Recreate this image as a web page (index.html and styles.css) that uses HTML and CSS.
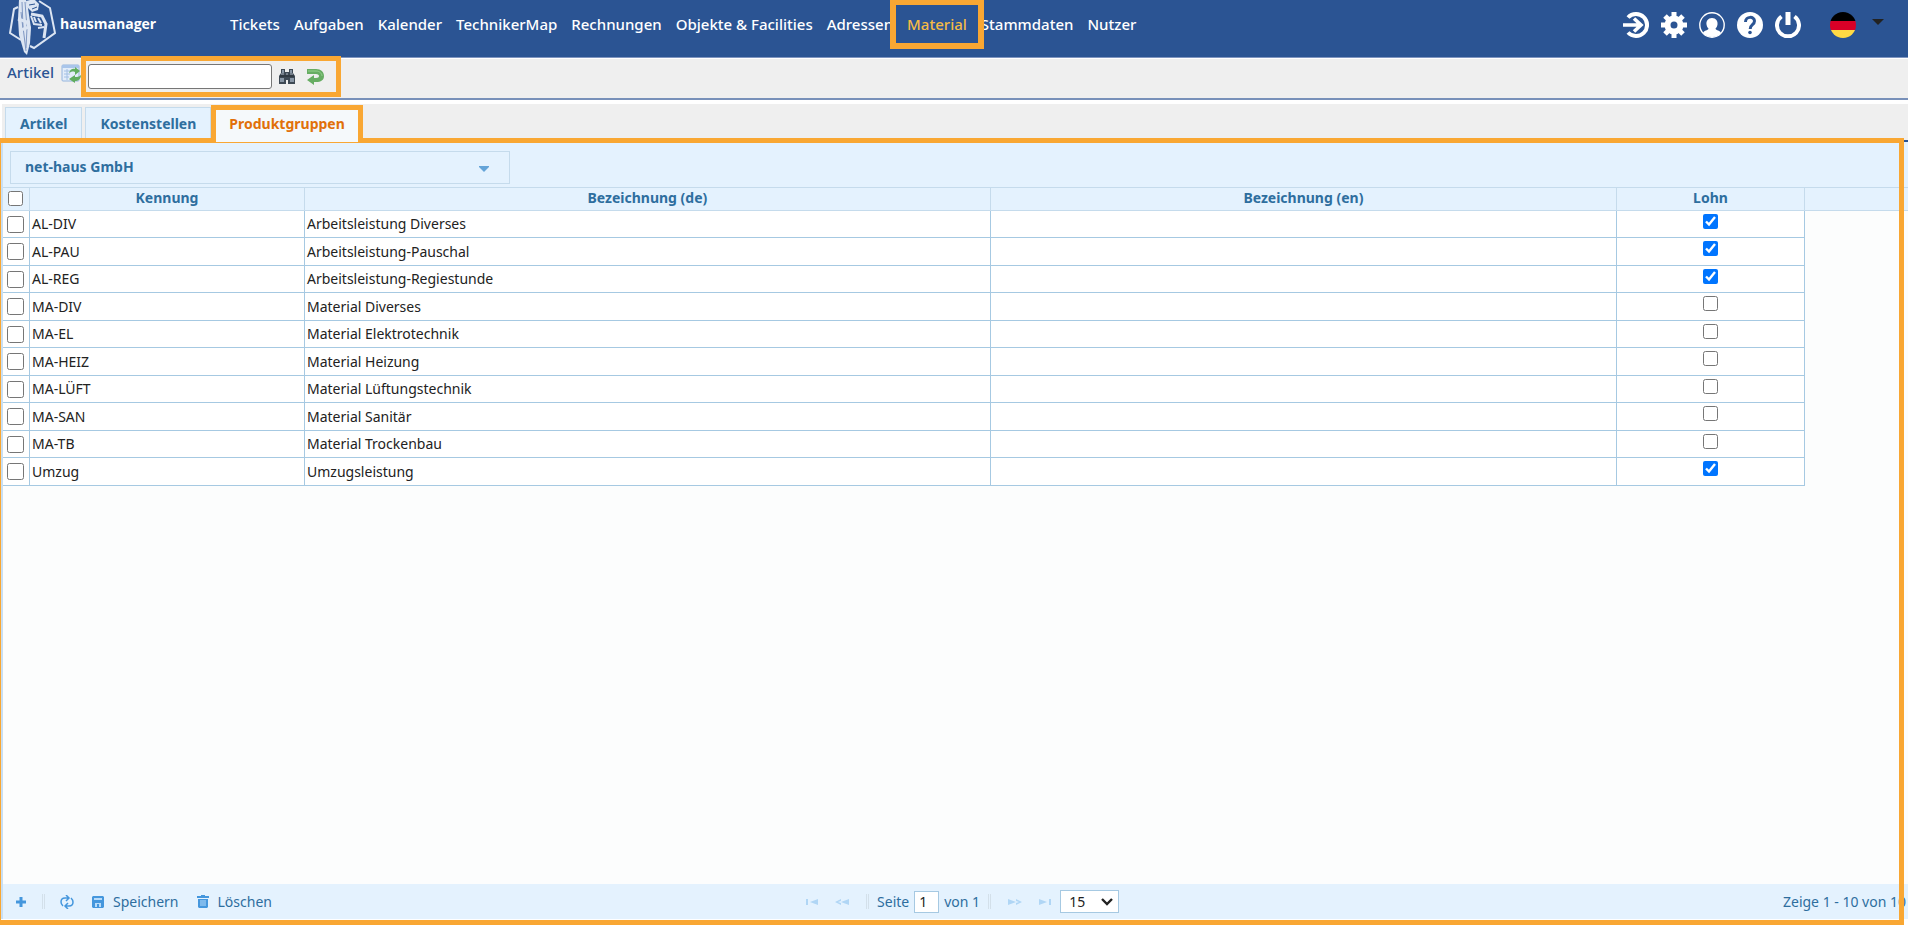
FILE: index.html
```html
<!DOCTYPE html>
<html lang="de">
<head>
<meta charset="utf-8">
<title>hausmanager – Produktgruppen</title>
<link rel="stylesheet" href="styles.css">
</head>
<body>
<header class="topbar">
  <a class="brand" href="#">
    <svg class="brand-mark" width="48" height="56" viewBox="0 0 48 56" fill="none" stroke="#dce5f2">
      <path d="M9 7L5 9L1 33L12 40M30 1L41 8L46 33L25 48L21 46" stroke-width="2"/>
      <path d="M10 0h7l2 8 3 20-1 15-3 12-3-3-5-17-1-16z" fill="#dce5f2" stroke="none"/>
      <path d="M13 2l1 25 3 24M16 2l2 26-1 20M12 12l2 17" stroke="#7f97c2"/>
      <path d="M17 1l8-2 5 5-1 6-6 2-5-5z" fill="#dce5f2" stroke="none"/>
      <path d="M9 19l9 3 2 5-8 3M22 14l11 2 4 8-2 14" stroke-width="3"/>
      <path d="M22 16l3 8 8 1M25 17l2 5M29 18l3 5M29 28l6-1M22 5l7 2" stroke-width="2"/>
      <path d="M23 9l5-2M20 5l6-1" stroke="#2b5493"/>
    </svg>
    <span class="brand-name">hausmanager</span>
  </a>
  <nav class="mainnav">
    <a href="#">Tickets</a><a href="#">Aufgaben</a><a href="#">Kalender</a><a href="#">TechnikerMap</a><a href="#">Rechnungen</a><a href="#">Objekte &amp; Facilities</a><a href="#">Adressen</a><a href="#" class="current">Material</a><a href="#">Stammdaten</a><a href="#">Nutzer</a>
  </nav>
  <div class="tools">
    <button type="button" aria-label="Anmelden"><svg viewBox="0 0 26 26" fill="none" stroke="#fff" stroke-width="4"><path d="M5 5.500a11 11 0 1 1 0 15"/><path d="M0 13h18M11 6.500l7 6.500-7 6.500" stroke-width="3.600"/></svg></button>
    <button type="button" aria-label="Einstellungen"><svg viewBox="0 0 26 26"><path fill="none" stroke="#fff" stroke-width="5" d="M13 0v5M13 21v5M0 13h5M21 13h5M4 4l4 4M18 18l4 4M22 4l-4 4M8 18l-4 4"/><circle cx="13" cy="13" r="6.500" fill="none" stroke="#fff" stroke-width="6"/></svg></button>
    <button type="button" aria-label="Profil"><svg viewBox="0 0 26 26"><circle cx="13" cy="13" r="12.200" fill="none" stroke="#fff" stroke-width="1.400"/><path fill="#fff" d="M13 6c4 0 6 3 5.500 6.500-.3 2-1 3-2 4 .3 2 5 2 5.500 4.500A12 12 0 0 1 13 25a12 12 0 0 1-9-4c.5-2.500 5.200-2.500 5.500-4.500-1-1-1.700-2-2-4C7 9 9 6 13 6z"/></svg></button>
    <button type="button" aria-label="Hilfe"><svg viewBox="0 0 26 26"><circle cx="13" cy="13" r="13" fill="#fff"/><path fill="none" stroke="#2b5493" stroke-width="3" d="M8.500 10c0-6 9-6 9-1 0 4-4.300 3.500-4.300 8"/><circle cx="13" cy="20.500" r="1.800" fill="#2b5493"/></svg></button>
    <button type="button" aria-label="Abmelden"><svg viewBox="0 0 26 26" fill="none" stroke="#fff" stroke-width="4"><path d="M6.500 4.500a11 11 0 1 0 13 0"/><path d="M13 0v13" stroke-width="5"/></svg></button>
    <button type="button" class="language" aria-label="Sprache: Deutsch">
      <svg viewBox="0 0 26 26"><clipPath id="disc"><circle cx="13" cy="13" r="13"/></clipPath><g clip-path="url(#disc)"><path d="M0 0h26v9H0z"/><path fill="#d80027" d="M0 9h26v9H0z"/><path fill="#ffda44" d="M0 18h26v8H0z"/></g></svg>
      <svg class="caret" viewBox="0 0 12 6"><path fill="#222" d="M0 0h12L6 6z"/></svg>
    </button>
  </div>
</header>

<div class="subbar">
  <label class="subbar-title" for="suche">Artikel</label>
  <button type="button" class="plain reload" aria-label="Neu laden">
    <svg width="20" height="20" viewBox="0 0 20 20"><rect x="1" y="1" width="17" height="16" rx="1" fill="#e3edf9" stroke="#94b4dd"/><path fill="#a9c5ea" d="M1 1h17v3H1z"/><path stroke="#a3c0e4" fill="none" d="M3 7h8M3 10h6M3 13h5M6 5v11"/><path fill="#61ad5f" d="M8 9c1-4 4-5 6-4V3l5 4-5 4V8c-3-1-4 0-6 1zM20 11c0 4-3 6-6 6v2l-6-4 6-4v2c2 0 4 0 6-2z"/></svg>
  </button>
  <div class="searchbox">
    <input type="text" id="suche" class="search-input">
    <button type="button" class="plain" aria-label="Suchen">
      <svg width="18" height="18" viewBox="0 0 18 18"><path fill="#3e4954" d="M3 1h4v3h4V1h4v4l2 3v8h-7v-4H8v4H1V8l2-3z"/><path fill="#8996a5" d="M4 2h2v3H4zM12 2h2v3h-2zM2 10h4v4H2zM12 10h4v4h-4z"/><path stroke="#232a31" d="M2 8h14"/><path stroke="#aab4c0" d="M3 6h3M12 6h3M8 6h2"/></svg>
    </button>
    <button type="button" class="plain" aria-label="Zurücksetzen">
      <svg width="18" height="18" viewBox="0 0 18 18"><path fill="#67ad63" d="M1 1h9c5 0 8 3 8 7s-3 6-8 6H8v3l-7-5 7-5v3h2c4 0 4-4 0-4H1z"/><path fill="none" stroke="#95d28d" d="M2 3h8c4 0 6 3 6 5"/></svg>
    </button>
  </div>
</div>

<div class="tabs" role="tablist">
  <button type="button" role="tab" class="tab">Artikel</button>
  <button type="button" role="tab" class="tab">Kostenstellen</button>
  <button type="button" role="tab" class="tab active" aria-selected="true">Produktgruppen</button>
</div>

<main class="panel">
  <div class="filter">
    <select class="company" aria-label="Firma"><option>net-haus GmbH</option></select>
    <svg class="company-arrow" width="10" height="6" viewBox="0 0 10 6"><path fill="#64a4d8" d="M0 0h10v1L5 6 0 1z"/></svg>
  </div>
  <div class="gridarea">
    <table class="grid">
      <colgroup><col class="c-check"><col class="c-id"><col class="c-de"><col><col class="c-lohn"><col class="c-rest"></colgroup>
      <thead><tr><th><input type="checkbox" aria-label="Alle auswählen"></th><th>Kennung</th><th>Bezeichnung (de)</th><th>Bezeichnung (en)</th><th>Lohn</th><th class="rest"></th></tr></thead>
      <tbody>
        <tr><td><input type="checkbox" aria-label="AL-DIV auswählen"></td><td>AL-DIV</td><td>Arbeitsleistung Diverses</td><td></td><td class="lohn"><input type="checkbox" aria-label="Lohn" checked></td><td class="rest"></td></tr>
        <tr><td><input type="checkbox" aria-label="AL-PAU auswählen"></td><td>AL-PAU</td><td>Arbeitsleistung-Pauschal</td><td></td><td class="lohn"><input type="checkbox" aria-label="Lohn" checked></td><td class="rest"></td></tr>
        <tr><td><input type="checkbox" aria-label="AL-REG auswählen"></td><td>AL-REG</td><td>Arbeitsleistung-Regiestunde</td><td></td><td class="lohn"><input type="checkbox" aria-label="Lohn" checked></td><td class="rest"></td></tr>
        <tr><td><input type="checkbox" aria-label="MA-DIV auswählen"></td><td>MA-DIV</td><td>Material Diverses</td><td></td><td class="lohn"><input type="checkbox" aria-label="Lohn"></td><td class="rest"></td></tr>
        <tr><td><input type="checkbox" aria-label="MA-EL auswählen"></td><td>MA-EL</td><td>Material Elektrotechnik</td><td></td><td class="lohn"><input type="checkbox" aria-label="Lohn"></td><td class="rest"></td></tr>
        <tr><td><input type="checkbox" aria-label="MA-HEIZ auswählen"></td><td>MA-HEIZ</td><td>Material Heizung</td><td></td><td class="lohn"><input type="checkbox" aria-label="Lohn"></td><td class="rest"></td></tr>
        <tr><td><input type="checkbox" aria-label="MA-LÜFT auswählen"></td><td>MA-LÜFT</td><td>Material Lüftungstechnik</td><td></td><td class="lohn"><input type="checkbox" aria-label="Lohn"></td><td class="rest"></td></tr>
        <tr><td><input type="checkbox" aria-label="MA-SAN auswählen"></td><td>MA-SAN</td><td>Material Sanitär</td><td></td><td class="lohn"><input type="checkbox" aria-label="Lohn"></td><td class="rest"></td></tr>
        <tr><td><input type="checkbox" aria-label="MA-TB auswählen"></td><td>MA-TB</td><td>Material Trockenbau</td><td></td><td class="lohn"><input type="checkbox" aria-label="Lohn"></td><td class="rest"></td></tr>
        <tr><td><input type="checkbox" aria-label="Umzug auswählen"></td><td>Umzug</td><td>Umzugsleistung</td><td></td><td class="lohn"><input type="checkbox" aria-label="Lohn" checked></td><td class="rest"></td></tr>
      </tbody>
    </table>
  </div>
  <footer class="pagerbar">
    <div class="actions">
      <button type="button" class="act" aria-label="Neu"><svg width="12" height="12" viewBox="0 0 12 12"><path stroke="#4597dd" stroke-width="3" d="M6 1v10M1 6h10"/></svg></button>
      <span class="sep"></span>
      <button type="button" class="act refresh" aria-label="Aktualisieren"><svg width="14" height="14" viewBox="0 0 14 14" fill="none" stroke="#4597dd" stroke-width="1.500"><path d="M8 3H5C2 3 1 5 1 7s1 3 2 4M6 11h3c3 0 4-2 4-4s-1-3-2-4M6 0l3 3-3 3M8 8l-3 3 3 3"/></svg></button>
      <button type="button" class="act save"><svg width="12" height="12" viewBox="0 0 12 12"><path fill="#4597dd" d="M1 0h10l1 1v10l-1 1H1l-1-1V1z"/><path fill="#b9dcfa" d="M2 2h8v2H2zM3 7h6v4H7V8H5v3H3z"/></svg>Speichern</button>
      <button type="button" class="act"><svg width="12" height="13" viewBox="0 0 12 13"><path fill="#4597dd" d="M4 0h4v1h4v2H0V1h4zM1 4h10v8l-1 1H2l-1-1z"/><path stroke="#b9dcfa" d="M4 5v6M6 5v6M8 5v6"/></svg>Löschen</button>
    </div>
    <div class="pager">
      <button type="button" class="act" aria-label="Erste Seite"><svg width="12" height="8" viewBox="0 0 12 8"><path fill="#b0d6f5" d="M0 1h2v6H0zM12 1v6L4 4z"/></svg></button>
      <button type="button" class="act" aria-label="Vorherige Seite"><svg width="14" height="8" viewBox="0 0 14 8"><path fill="#b0d6f5" d="M14 1v6L6 4zM6 1v2L3 4l3 1v2L0 4z"/></svg></button>
      <span class="sep"></span>
      <label class="page">Seite <input type="text" value="1" class="page-input"> von 1</label>
      <span class="sep"></span>
      <button type="button" class="act" aria-label="Nächste Seite"><svg width="14" height="8" viewBox="0 0 14 8"><path fill="#b0d6f5" d="M0 1v6l8-3zM8 1v2l3 1-3 1v2l6-3z"/></svg></button>
      <button type="button" class="act" aria-label="Letzte Seite"><svg width="12" height="8" viewBox="0 0 12 8"><path fill="#b0d6f5" d="M10 1h2v6h-2zM0 1v6l8-3z"/></svg></button>
      <span class="size"><select class="page-size" aria-label="Einträge pro Seite"><option>15</option></select><svg width="12" height="8" viewBox="0 0 12 8"><path d="M1 1l5 5 5-5" fill="none" stroke="#222" stroke-width="2.400"/></svg></span>
    </div>
    <span class="range">Zeige 1 - 10 von 10</span>
  </footer>
</main>
</body>
</html>
```
FILE: styles.css
```css
* { box-sizing: border-box; }

html, body { height: 100%; }

body {
  margin: 0;
  display: flex;
  flex-direction: column;
  overflow: hidden;
  background: #fff;
  color: #222;
  font: 14px/20px "Noto Sans", sans-serif;
}

button, input, select { font: inherit; color: inherit; }

button {
  margin: 0;
  padding: 0;
  border: 0;
  background: none;
  cursor: pointer;
}

svg { display: block; flex: none; }

/* Header */
.topbar {
  display: flex;
  align-items: flex-start;
  height: 58px;
  flex: none;
  background: #2b5493;
  border-bottom: 1px solid #7f95c0;
}

.brand {
  display: flex;
  width: 230px;
  padding-left: 9px;
  color: #fff;
  text-decoration: none;
}

.brand-name {
  margin-left: 3px;
  font: bold 14px/48px "Open Sans", sans-serif;
}

.mainnav { display: flex; gap: 14px; }

.mainnav a {
  position: relative;
  padding: 14px 0 15px;
  color: #fff;
  font-size: 15px;
  font-weight: 500;
  text-decoration: none;
  white-space: nowrap;
}

.mainnav .current { color: #f5bb45; z-index: 1; }

.mainnav .current::after {
  content: "";
  position: absolute;
  inset: 0 -17px;
  border: 6px solid #f9a733;
  border-top-width: 5px;
}

.tools {
  display: flex;
  gap: 12px;
  margin-left: auto;
  padding: 12px 24px 0 0;
}

.tools svg { width: 26px; height: 26px; }

.tools .language { display: flex; gap: 16px; margin-left: 17px; }

.tools .caret { width: 12px; height: 6px; margin-top: 7px; }

/* Search bar */
.subbar {
  display: flex;
  align-items: flex-start;
  flex: none;
  height: 41px;
  margin-top: 1px;
  padding-left: 7px;
  background: #efefef;
  border-bottom: 2px solid #7890b9;
}

.subbar-title {
  padding-top: 3px;
  color: #2b5493;
  font-size: 15px;
  font-weight: 500;
}

.reload { margin: 5px 0 0 7px; }

.searchbox {
  position: relative;
  z-index: 1;
  display: flex;
  align-items: center;
  gap: 10px;
  width: 260px;
  height: 41px;
  margin-top: -3px;
  padding-left: 2px;
  border: 5px solid #f9a733;
}

.search-input {
  width: 184px;
  height: 25px;
  margin-right: -4px;
  padding: 0 4px;
  border: 1px solid #767676;
  border-radius: 3px;
  background: #fff;
}

/* Tabs */
.tabs {
  display: flex;
  align-items: flex-end;
  gap: 3px;
  flex: none;
  height: 38px;
  margin: 4px 0 0 2px;
  padding-left: 3px;
  background: #efefef;
  border-bottom: 2px solid #2b5493;
}

.tab {
  height: 33px;
  padding: 0 14px;
  border: 1px solid #c5dbec;
  border-bottom: 0;
  background: #e4f2fe;
  color: #2e6e9e;
  font-weight: bold;
}

.tab.active {
  position: relative;
  z-index: 3;
  height: 37px;
  margin: 0 0 -2px -3px;
  padding: 0 13px 4px;
  border: 5px solid #f9a733;
  border-bottom: 0;
  background: #f5f9fb;
  color: #e17009;
}

/* Grid panel */
.panel {
  position: relative;
  display: flex;
  flex-direction: column;
  flex: 1;
  min-height: 0;
  margin-bottom: 9px;
  border-left: 3px solid #c9dff2;
  background: #e4f2fe;
  color: #2e6e9e;
}

.panel::after {
  content: "";
  position: absolute;
  inset: -4px 4px -6px -3px;
  border: 5px solid #f9a733;
  border-left-width: 1px;
  pointer-events: none;
}

.filter {
  position: relative;
  display: flex;
  margin: 9px 7px 3px;
}

.company {
  width: 500px;
  height: 33px;
  padding: 0 14px 2px;
  border: 1px solid #c5dbec;
  background: #e4f2fe;
  color: #2e6e9e;
  font-weight: bold;
  appearance: none;
}

.company-arrow { margin: 15px 0 0 -31px; pointer-events: none; }

.gridarea { flex: 1; background: #fcfdfd; }

.grid {
  width: 100%;
  table-layout: fixed;
  border-collapse: separate;
  border-spacing: 0;
}

.c-check { width: 27px; }
.c-id { width: 275px; }
.c-de { width: 36%; }
.c-lohn { width: 188px; }
.c-rest { width: 103px; }

.grid th {
  height: 24px;
  padding: 0 0 2px;
  border: solid #c5dbec;
  border-width: 1px 1px 1px 0;
  background: #e4f2fe;
  line-height: 20px;
}

.grid td {
  height: 28px;
  padding: 0 2px;
  border: solid #a6c9e2;
  border-width: 0 1px 1px 0;
  background: #fff;
  color: #222;
}

.grid tr:nth-child(odd) td { height: 27px; }

.grid .rest { border-right: 0; }

.grid td.rest { border: 0; background: none; }

.grid input {
  display: block;
  width: 15px;
  height: 15px;
  margin: 0 auto;
}

.grid th input { margin-left: 5px; }

.grid td:first-child input { width: 17px; height: 17px; margin-left: 2px; }

.grid .lohn { vertical-align: top; padding-top: 3px; }

/* Footer bar */
.pagerbar {
  display: flex;
  align-items: center;
  height: 35px;
  flex: none;
  white-space: nowrap;
}

.actions {
  display: flex;
  align-items: center;
  width: 42%;
  padding-left: 12px;
}

.act { display: flex; align-items: center; gap: 9px; color: #2e6e9e; }

.sep {
  width: 3px;
  height: 15px;
  border: solid #d3e0ea;
  border-width: 0 1px;
}

.actions .sep { margin: 0 15px; }
.actions .refresh { margin-right: 18px; }
.actions .save { margin-right: 18px; }

.pager { display: flex; align-items: center; gap: 17px; padding-left: 3px; }

.page {
  display: flex;
  align-items: center;
  gap: 5px;
  margin: 0 -9px;
}

.page-input {
  width: 25px;
  height: 22px;
  padding: 0 4px;
  border: 1px solid #a6c9e2;
  background: #fff;
  color: #222;
}

.size { display: flex; align-items: center; margin-left: -8px; }

.size svg { margin-left: -18px; pointer-events: none; }

.page-size {
  width: 59px;
  height: 23px;
  padding: 0 8px;
  border: 1px solid #a6c9e2;
  background: #fff;
  color: #222;
  appearance: none;
}

.range { margin-left: auto; padding-right: 2px; }
```
